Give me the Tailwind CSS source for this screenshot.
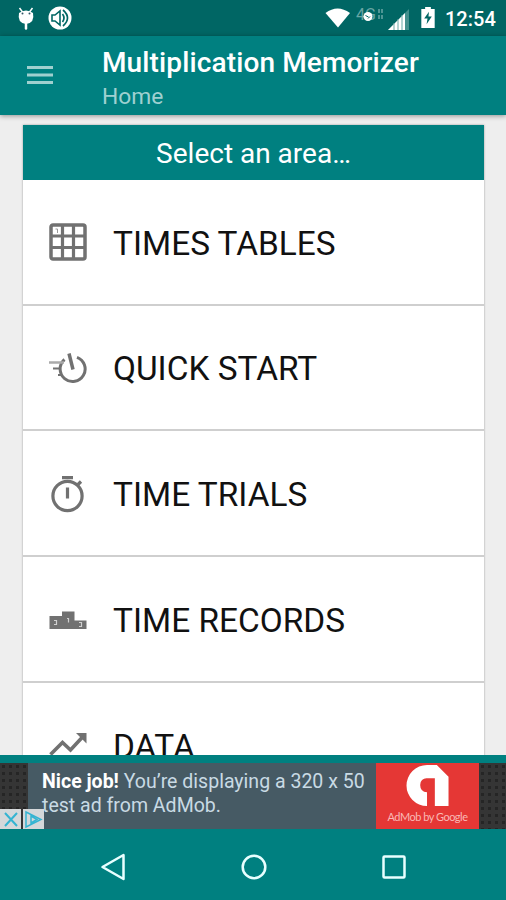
<!DOCTYPE html>
<html lang="en">
<head>
<meta charset="utf-8">
<title>Multiplication Memorizer</title>
<script src="https://cdn.jsdelivr.net/npm/@tailwindcss/browser@4"></script>
</head>
<body class="w-[506px] h-[900px] overflow-hidden flex flex-col bg-[#eeeeee] font-['Roboto',sans-serif]">
<div class="h-9 shrink-0 bg-[#006664] flex items-center pl-[17px] pr-[10px] text-white">
  <svg class="w-[18px] h-[26px]" viewBox="0 0 18 26"><path d="M2.500 3l3 4M15.500 3l-3 4" stroke="#fff" stroke-width="1.500"/><path d="M2 8Q5 5.500 9 5.500T16 8Q18 18 9 19Q0 18 2 8Z" fill="#fff"/><path d="M9 18v5.500" stroke="#fff" stroke-width="2.500" stroke-linecap="round"/><circle cx="5.500" cy="8.500" r="1" fill="#356"/><circle cx="12.500" cy="8.500" r="1" fill="#356"/></svg>
  <svg class="w-6 h-6 ml-[13px]" viewBox="0 0 24 24"><circle cx="12" cy="12" r="11.500" fill="#fff"/><path d="M4 9h3l5-4v14l-5-4H4z" fill="#fff" stroke="#006664" stroke-width="1.600"/><path d="M14.500 8q3 4 0 8M15 4q9 8 0 16" fill="none" stroke="#006664" stroke-width="1.700"/></svg>
  <div class="flex-1"></div>
  <svg class="w-[26px] h-5 mr-px -ml-px" viewBox="0 0 26 20"><path d="M0.500 5Q12.500-4 25 5L13 19.500Z" fill="#fff"/></svg>
  <div class="relative w-[30px] h-5 ml-[4px] mr-px -mt-[4px] text-[16px] leading-[17px] text-[#6aa7a5]">4G<svg class="absolute left-0 top-0 w-[30px] h-5" viewBox="0 0 30 20"><circle cx="12" cy="10.500" r="4.500" fill="#fff"/><path d="M9.500 9.500l3 1.500M12 12.500l2-2" stroke="#006664"/><path d="M23 3v4M26 3v4M23 9v4M26 9v4" stroke="#6aa7a5" stroke-width="1.500"/></svg></div>
  <svg class="w-[22px] h-[22px] ml-[1px] mt-[1px]" viewBox="0 0 22 22"><path d="M0 22L21 1V22Z" fill="#438f8d"/><path d="M0 22L17 5V22Z" fill="#fff"/><path d="M6 15v7M10 11v11M14 7v15" stroke="#6aa7a5"/></svg>
  <svg class="w-[14px] h-[21px] ml-[11px] -mt-px" viewBox="0 0 14 22"><path d="M4 0h6v2h4v20H0V2h4z" fill="#fff"/><path d="M8 5l-5 7h3.500L5.500 18l5.500-8H7.500z" fill="#006664"/></svg>
  <div class="ml-[10px] w-[51px] text-[20px] leading-6 font-medium mt-[2px] whitespace-nowrap">12:54</div>
</div>
<header class="relative z-10 h-[79px] shrink-0 bg-[#008080] shadow-[0_1px_5px_rgba(0,0,0,0.4)] flex pl-[27px] text-white">
  <svg class="w-[26px] h-[20px] mt-[29px]" viewBox="0 0 26 20"><path d="M0 2.500h26M0 10h26M0 17.500h26" stroke="#a0d0cf" stroke-width="3"/></svg>
  <div class="ml-[49px] pt-[11px] whitespace-nowrap">
    <div class="text-[28px] leading-8 font-medium tracking-[0.13px]">Multiplication Memorizer</div>
    <div class="text-[22.800px] leading-[28px] mt-[4px] text-[#9fd0d0]">Home</div>
  </div>
</header>
<main class="h-[640px] shrink-0 overflow-hidden pl-[23px] pr-[22px] pt-[10px]">
  <section class="bg-white shadow-[0_0_2px_rgba(0,0,0,0.35)] text-[33.400px] text-[#111]">
    <h1 class="h-[55px] bg-[#008080] text-white text-[28px] leading-[58px] text-center">Select an area…</h1>
    <div class="h-[126px] border-b-2 border-[#cfcfcf] flex items-center pl-[26px] pt-[4px] gap-[26px]">
      <svg class="w-[38px] h-[38px] -mt-[4px]" viewBox="0 0 38 38"><rect x="2" y="2" width="34" height="34" rx="2" fill="none" stroke="#717171" stroke-width="3.500"/><path d="M13.500 2v34M24.500 2v34M2 13h34M2 24.500h34" stroke="#717171" stroke-width="3.200"/><path d="M6.500 6h2v4" fill="none" stroke="#999"/></svg>
      <span>TIMES TABLES</span>
    </div>
    <div class="h-[125px] border-b-2 border-[#cfcfcf] flex items-center pl-[26px] pt-[4px] gap-[26px]">
      <svg class="w-[38px] h-[38px]" viewBox="0 0 38 38"><g fill="none" stroke="#717171" stroke-width="3"><path d="M15.500 8.500A12.500 12.500 0 1 0 28 6.300"/><path d="M20 2.500l4 16" stroke-width="3.500"/><path d="M0 11.500h15" stroke-width="2.500" stroke="#aaa"/><path d="M4 17.500h7M9 24h4" stroke-width="2"/></g></svg>
      <span>QUICK START</span>
    </div>
    <div class="h-[126px] border-b-2 border-[#cfcfcf] flex items-center pl-[26px] pt-[4px] gap-[26px]">
      <svg class="w-[38px] h-[38px]" viewBox="0 0 38 38"><g fill="none" stroke="#717171" stroke-width="3.200"><circle cx="18.500" cy="20" r="14.600"/><path d="M13 1.600h11M18.500 11.500v11M28 9.500l4-4"/></g></svg>
      <span>TIME TRIALS</span>
    </div>
    <div class="h-[126px] border-b-2 border-[#cfcfcf] flex items-center pl-[26px] pt-[4px] gap-[26px]">
      <svg class="w-[38px] h-[38px]" viewBox="0 0 38 38"><path d="M0.500 14H13V9.500h12.500v9h12v8.500h-37z" fill="#717171"/><path d="M5 18.500h2.500v4H5M18 16.500h1.500v4M30 20.500h2.500v4H30" fill="none" stroke="#d0d0d0" stroke-width="1.200"/></svg>
      <span>TIME RECORDS</span>
    </div>
    <div class="h-[126px] flex items-center pl-[26px] pt-[2px] gap-[26px]">
      <svg class="w-[38px] h-[38px] -mt-[2px]" viewBox="0 0 38 38"><path d="M1.500 27.500L13.500 15.500l8 7.500L34 9.500" fill="none" stroke="#717171" stroke-width="3.600"/><path d="M27 6h10.500v10.500z" fill="#717171"/></svg>
      <span>DATA</span>
    </div>
  </section>
</main>
<aside class="h-[74px] shrink-0 relative bg-[#008080] pt-[8px] flex">
  <div class="w-[28px] h-[66px] bg-[#353535] bg-[radial-gradient(#252525_1.5px,transparent_2px)] bg-[size:7px_7px]"></div>
  <div class="w-[348px] h-[66px] bg-[#465a64] pl-[14px] pt-[7px] text-[19.550px] leading-[23.500px] text-[#c9dae4] whitespace-nowrap"><b class="text-white">Nice job!</b> You’re displaying a 320 x 50<br>test ad from AdMob.</div>
  <div class="w-[103px] h-[66px] bg-[#e53735] flex flex-col items-center">
    <svg class="w-[44px] h-[43px] mt-px" viewBox="0 0 44 44"><path d="M21 43A21 21 0 0 1 21 1h10l12 12v30H29V14.500h-8a6.500 6.500 0 0 0-7 7q0 7 7 7.500z" fill="#fff"/></svg>
    <div class="font-['Lato',sans-serif] text-[11px] tracking-[-0.5px] leading-4 text-[#f9b7b4] whitespace-nowrap mt-[2px]">AdMob by Google</div>
  </div>
  <div class="flex-1 h-[66px] bg-[#353535] bg-[radial-gradient(#252525_1.5px,transparent_2px)] bg-[size:7px_7px]"></div>
  <div class="absolute left-0 top-[54px] flex gap-[2px]">
    <svg class="w-[21px] h-[21px] bg-[#d5d8da]" viewBox="0 0 21 21"><path d="M5 4l12 13M17 4L5 17" stroke="#35b4d2" stroke-width="2"/></svg>
    <svg class="w-[21px] h-[21px] bg-[#d5d8da]" viewBox="0 0 21 21"><path d="M3 3l15 7.500L3 18zM8 7v7l6-3.500z" fill="none" stroke="#35b4d2" stroke-width="1.500"/></svg>
  </div>
</aside>
<nav class="h-[71px] shrink-0 bg-[#008080] relative pl-[100px] pr-[99px] pt-[4px] flex items-center justify-between">
  <svg class="w-[26px] h-[28px]" viewBox="0 0 26 28"><path d="M2.500 14L23.500 2v24z" fill="none" stroke="#e8ffff" stroke-width="2.500" stroke-linejoin="round"/></svg>
  <svg class="w-[26px] h-[26px]" viewBox="0 0 26 26"><circle cx="13" cy="13" r="11.300" fill="none" stroke="#e8ffff" stroke-width="2.500"/></svg>
  <svg class="w-[26px] h-[26px]" viewBox="0 0 26 26"><rect x="2.500" y="2.500" width="21" height="21" rx="1" fill="none" stroke="#e8ffff" stroke-width="2.500"/></svg>
</nav>
</body>
</html>
